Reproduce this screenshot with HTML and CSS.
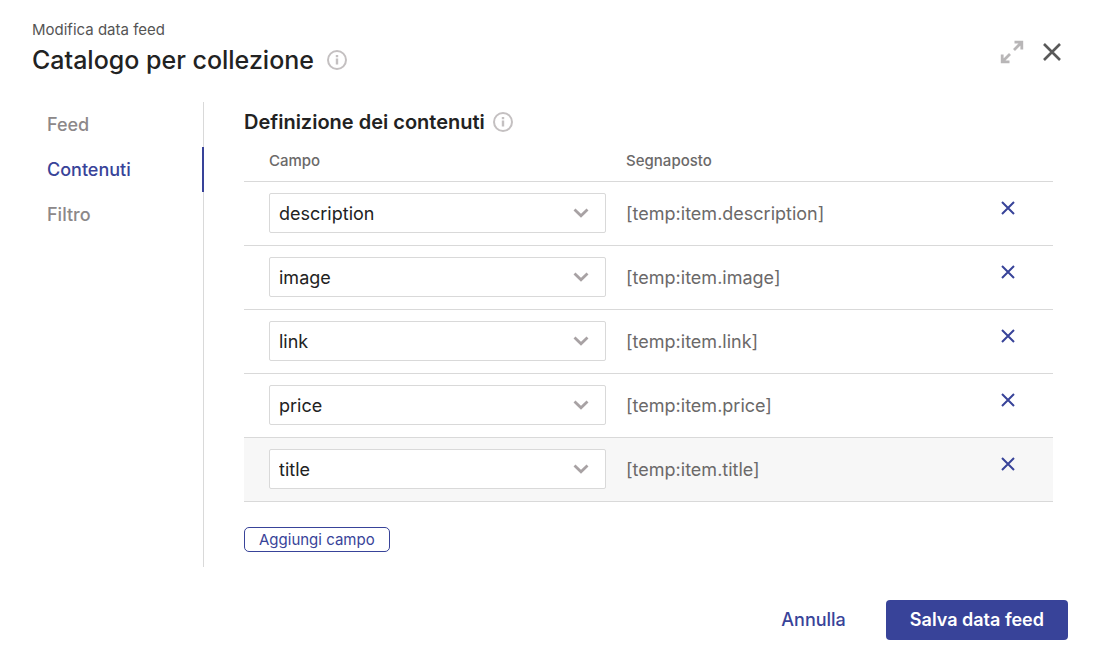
FILE: index.html
```html
<!DOCTYPE html>
<html lang="it">
<head>
<meta charset="UTF-8" />
<meta name="viewport" content="width=device-width, initial-scale=1" />
<title>Catalogo per collezione</title>
<link rel="stylesheet" href="styles.css">
</head>
<body>

<!-- shared icons -->
<svg class="sprite" aria-hidden="true">
  <symbol id="icon-info" viewBox="0 0 20 20">
    <circle cx="10" cy="10" r="9" fill="none" stroke="currentColor" stroke-width="2"/>
    <path d="M10 5v2.2M10 8.5v6" fill="none" stroke="currentColor" stroke-width="2.4"/>
  </symbol>
  <symbol id="icon-chevron" viewBox="0 0 16 10">
    <path d="M1.5 1.5L8 7.8l6.5-6.3" fill="none" stroke="currentColor" stroke-width="2.8"/>
  </symbol>
  <symbol id="icon-remove" viewBox="0 0 14 14">
    <path d="M1 1l12 12M13 1L1 13" fill="none" stroke="currentColor" stroke-width="2"/>
  </symbol>
</svg>

<div class="dialog">
  <header class="header">
    <div>
      <div class="subtitle">Modifica data feed</div>
      <div class="title-row">
        <h1>Catalogo per collezione</h1>
        <svg class="info"><use href="#icon-info"/></svg>
      </div>
    </div>
    <div class="window-buttons">
      <button type="button" class="icon-btn expand" aria-label="Espandi">
        <svg viewBox="0 0 24 24" width="24" height="24" fill="none" stroke="currentColor" stroke-width="2.8">
          <path d="M14.5 2.2h7.3v7.3M21.5 2.5L14 10M2.2 14.5v7.3h7.3M2.5 21.5L10 14"/>
        </svg>
      </button>
      <button type="button" class="icon-btn close" aria-label="Chiudi">
        <svg viewBox="0 0 18 18" width="18" height="18" fill="none" stroke="currentColor" stroke-width="2.6">
          <path d="M1 1l16 16M17 1L1 17"/>
        </svg>
      </button>
    </div>
  </header>

  <div class="main">
    <nav class="tabs">
      <a href="#feed">Feed</a>
      <a href="#contenuti" class="active">Contenuti</a>
      <a href="#filtro">Filtro</a>
    </nav>

    <section class="content">
      <div class="section-title">
        <h2>Definizione dei contenuti</h2>
        <svg class="info"><use href="#icon-info"/></svg>
      </div>

      <table class="fields">
        <thead>
          <tr>
            <th class="col-field">Campo</th>
            <th class="col-placeholder">Segnaposto</th>
            <th class="col-remove"></th>
          </tr>
        </thead>
        <tbody>
          <tr>
            <td class="col-field">
              <div class="select">
                <select aria-label="Campo"><option>description</option></select>
                <svg><use href="#icon-chevron"/></svg>
              </div>
            </td>
            <td class="col-placeholder">[temp:item.description]</td>
            <td class="col-remove"><button type="button" class="icon-btn" aria-label="Rimuovi"><svg><use href="#icon-remove"/></svg></button></td>
          </tr>
          <tr>
            <td class="col-field">
              <div class="select">
                <select aria-label="Campo"><option>image</option></select>
                <svg><use href="#icon-chevron"/></svg>
              </div>
            </td>
            <td class="col-placeholder">[temp:item.image]</td>
            <td class="col-remove"><button type="button" class="icon-btn" aria-label="Rimuovi"><svg><use href="#icon-remove"/></svg></button></td>
          </tr>
          <tr>
            <td class="col-field">
              <div class="select">
                <select aria-label="Campo"><option>link</option></select>
                <svg><use href="#icon-chevron"/></svg>
              </div>
            </td>
            <td class="col-placeholder">[temp:item.link]</td>
            <td class="col-remove"><button type="button" class="icon-btn" aria-label="Rimuovi"><svg><use href="#icon-remove"/></svg></button></td>
          </tr>
          <tr>
            <td class="col-field">
              <div class="select">
                <select aria-label="Campo"><option>price</option></select>
                <svg><use href="#icon-chevron"/></svg>
              </div>
            </td>
            <td class="col-placeholder">[temp:item.price]</td>
            <td class="col-remove"><button type="button" class="icon-btn" aria-label="Rimuovi"><svg><use href="#icon-remove"/></svg></button></td>
          </tr>
          <tr class="highlight">
            <td class="col-field">
              <div class="select">
                <select aria-label="Campo"><option>title</option></select>
                <svg><use href="#icon-chevron"/></svg>
              </div>
            </td>
            <td class="col-placeholder">[temp:item.title]</td>
            <td class="col-remove"><button type="button" class="icon-btn" aria-label="Rimuovi"><svg><use href="#icon-remove"/></svg></button></td>
          </tr>
        </tbody>
      </table>

      <button type="button" class="add-btn">Aggiungi campo</button>
    </section>
  </div>

  <footer class="footer">
    <button type="button" class="cancel-btn">Annulla</button>
    <button type="button" class="save-btn">Salva data feed</button>
  </footer>
</div>

</body>
</html>
```
FILE: styles.css
```css
* {
  box-sizing: border-box;
}
body {
  margin: 0;
  background: #fff;
  color: #222;
  font-family: Inter, "Liberation Sans", sans-serif;
  font-size: 18px;
}
h1, h2 {
  margin: 0;
  font-weight: 500;
}
button, select {
  font-family: inherit;
}
svg {
  display: block;
}
.sprite {
  position: absolute;
  width: 0;
  height: 0;
}
.dialog {
  padding: 20px 34px 24px 32px;
}
.header {
  display: flex;
  justify-content: space-between;
}
.subtitle {
  font-size: 15px;
  line-height: 20px;
  color: #555;
}
.title-row {
  display: flex;
  align-items: center;
  gap: 13px;
}
h1 {
  font-size: 25px;
  line-height: 40px;
}
.info {
  width: 20px;
  height: 20px;
  color: #c4c0c1;
}
.window-buttons {
  display: flex;
  align-items: center;
  gap: 19px;
  height: 64px;
  padding-right: 7px;
}
.icon-btn {
  padding: 0;
  border: none;
  background: none;
  cursor: pointer;
}
.expand {
  color: #b8b6b7;
}
.close {
  color: #595959;
}
.main {
  display: flex;
  gap: 40px;
  margin-top: 18px;
  padding-right: 15px;
}
.tabs {
  width: 172px;
  flex-shrink: 0;
  border-right: 1px solid #d9d9d9;
}
.tabs a {
  display: block;
  padding-left: 15px;
  margin-right: -1px;
  line-height: 45px;
  font-weight: 500;
  color: #8c8889;
  text-decoration: none;
}
.tabs .active {
  color: #384399;
  border-right: 2px solid #384399;
}
.content {
  flex: 1;
  padding-bottom: 15px;
}
.section-title {
  display: flex;
  align-items: center;
  gap: 8px;
  height: 39px;
}
h2 {
  font-size: 20px;
  font-weight: 600;
}
.fields {
  width: 100%;
  table-layout: fixed;
  border-collapse: collapse;
}
.fields th {
  height: 40px;
  font-size: 15px;
  font-weight: 500;
  text-align: left;
  color: #6b6969;
}
.fields td {
  height: 64px;
  color: #6b6969;
}
.fields tr {
  border-bottom: 1px solid #d9d9d9;
}
.fields th, .fields td {
  padding: 0;
}
.fields .col-field {
  width: 45%;
  padding: 0 2px 0 25px;
}
.fields .col-placeholder {
  padding-left: 18px;
}
.fields .col-remove {
  width: 90px;
}
.fields td.col-remove {
  padding-bottom: 10px;
}
.col-remove svg {
  width: 14px;
  height: 14px;
}
.col-remove .icon-btn {
  display: block;
  margin: 0 auto;
  color: #384399;
}
.highlight {
  background: #f7f7f7;
}
/* chevron shares the grid cell with the select */
.select {
  display: grid;
  align-items: center;
}
.select select {
  grid-area: 1 / 1;
  appearance: none;
  width: 100%;
  height: 40px;
  padding: 0 40px 0 9px;
  border: 1px solid #d9d9d9;
  border-radius: 2px;
  background: #fff;
  color: #222;
  font-size: 18px;
}
.select svg {
  grid-area: 1 / 1;
  justify-self: end;
  width: 16px;
  height: 10px;
  margin-right: 17px;
  color: #a8a2a4;
  pointer-events: none;
}
.add-btn {
  display: block;
  height: 25px;
  margin-top: 25px;
  padding: 0 14px;
  border: 1px solid #384399;
  border-radius: 5px;
  background: #fff;
  color: #384399;
  font-size: 15px;
}
.footer {
  display: flex;
  justify-content: flex-end;
  gap: 16px;
  margin-top: 33px;
}
.cancel-btn, .save-btn {
  height: 40px;
  padding: 0 24px;
  border: none;
  border-radius: 4px;
  font-size: 18px;
  font-weight: 500;
}
.cancel-btn {
  background: none;
  color: #384399;
}
.save-btn {
  background: #384399;
  color: #fff;
  font-weight: 600;
}
```
